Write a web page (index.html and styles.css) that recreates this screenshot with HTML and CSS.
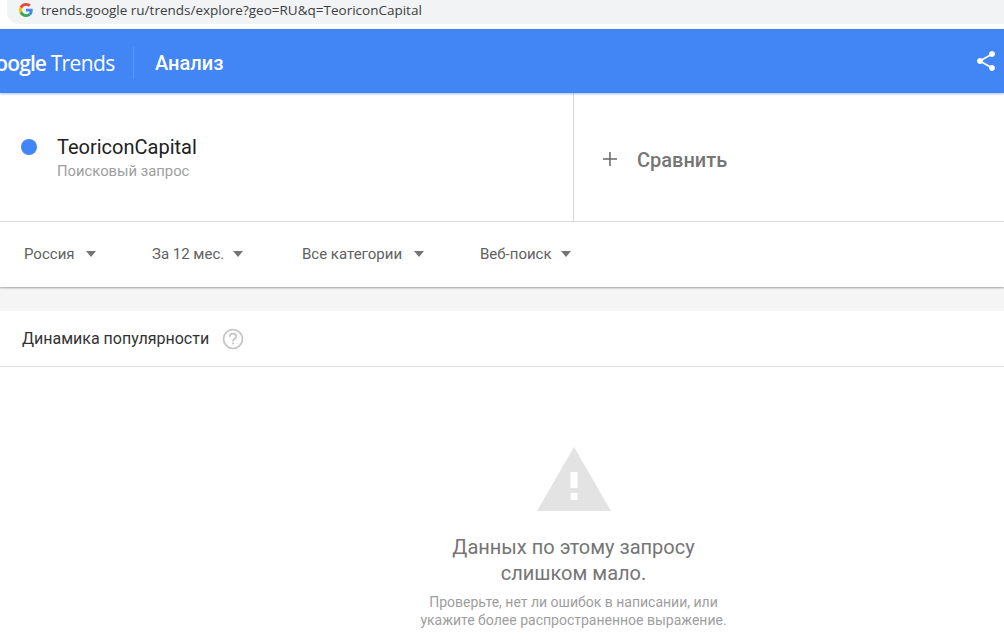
FILE: index.html
```html
<!DOCTYPE html>
<html lang="en">

<head>
    <meta charset="UTF-8">
    <meta name="viewport" content="width=device-width, initial-scale=1.0">
    <title>Google Trends</title>
    <link rel="stylesheet" href="styles.css">
</head>
<body>
    <div class="url-bar">
        <div class="url-pill">
            <svg class="g-icon" width="14" height="14" viewBox="0 0 48 48">
                <path fill="#ea4335" d="M24 9.500c3.500 0 6.700 1.200 9.200 3.600l6.900-6.900C35.900 2.400 30.500 0 24 0 14.600 0 6.500 5.400 2.600 13.200l8 6.200C12.500 13.600 17.800 9.500 24 9.500z"/>
                <path fill="#4285f4" d="M47 24.500c0-1.600-.1-3.100-.4-4.500H24v9h12.900c-.6 3-2.200 5.500-4.700 7.200l7.700 6C44.400 38.100 47 31.900 47 24.500z"/>
                <path fill="#fbbc05" d="M10.600 28.600c-.5-1.400-.8-3-.8-4.600s.3-3.200.8-4.600l-8-6.200C.9 16.500 0 20.100 0 24s.9 7.500 2.600 10.800l8-6.200z"/>
                <path fill="#34a853" d="M24 48c6.500 0 11.900-2.100 15.900-5.800l-7.700-6c-2.200 1.400-4.900 2.300-8.200 2.300-6.200 0-11.500-4.100-13.400-9.900l-8 6.200C6.500 42.600 14.600 48 24 48z"/>
            </svg>
            <span class="url-text">trends.google ru/trends/explore?geo=RU&amp;q=TeoriconCapital</span>
        </div>
    </div>

    <header class="app-bar">
        <div class="logo">Google <span class="logo-product">Trends</span></div>
        <div class="page-title">Анализ</div>
        <svg class="share-icon" width="24" height="24" viewBox="0 0 24 24">
            <path fill="#fff" d="M18 16.080c-.76 0-1.440.3-1.960.77L8.910 12.700c.05-.23.09-.46.09-.7s-.04-.47-.09-.7l7.050-4.110c.54.5 1.250.81 2.040.81 1.660 0 3-1.340 3-3s-1.340-3-3-3-3 1.340-3 3c0 .24.04.47.09.7L8.040 9.810C7.500 9.310 6.790 9 6 9c-1.660 0-3 1.340-3 3s1.340 3 3 3c.79 0 1.500-.31 2.040-.81l7.120 4.160c-.05.21-.08.43-.08.65 0 1.610 1.310 2.920 2.920 2.920s2.920-1.310 2.920-2.920-1.310-2.920-2.920-2.920z"/>
        </svg>
    </header>

    <section class="terms">
        <div class="term">
            <span class="term-dot"></span>
            <div>
                <div class="term-name">TeoriconCapital</div>
                <div class="term-type">Поисковый запрос</div>
            </div>
        </div>
        <div class="compare">
            <svg class="plus-icon" width="16" height="16" viewBox="0 0 16 16">
                <path fill="#666" d="M7.200 1h1.500v6.200H15v1.500H8.700V15H7.200V8.700H1V7.200h6.200z"/>
            </svg>
            <span>Сравнить</span>
        </div>
    </section>

    <section class="filters">
        <div class="filter filter-geo">Россия<span class="caret"></span></div>
        <div class="filter filter-time">За 12 мес.<span class="caret"></span></div>
        <div class="filter filter-cat">Все категории<span class="caret"></span></div>
        <div class="filter">Веб-поиск<span class="caret"></span></div>
    </section>

    <section class="card">
        <div class="card-head">
            <span>Динамика популярности</span>
            <svg class="help-icon" width="22" height="22" viewBox="0 0 22 22">
                <circle cx="11" cy="11" r="9.500" fill="none" stroke="#c4c4c4" stroke-width="1.700"/>
                <path fill="none" stroke="#c4c4c4" stroke-width="1.700" d="M7.800 8.800c0-1.900 1.400-3.100 3.200-3.100s3.200 1.200 3.200 2.800c0 2.200-3.200 2.400-3.200 4.900"/>
                <rect x="10.100" y="14.600" width="1.800" height="1.800" fill="#c4c4c4"/>
            </svg>
        </div>
        <div class="empty">
            <svg class="warn-icon" width="74" height="64" viewBox="0 0 74 64">
                <path fill="#e3e3e3" d="M37 0l37 64H0z"/>
                <rect x="33.500" y="25" width="7" height="16" fill="#fff"/>
                <rect x="33.500" y="46" width="7" height="7" fill="#fff"/>
            </svg>
            <div class="empty-title">Данных по этому запросу<br>слишком мало.</div>
            <div class="empty-text">Проверьте, нет ли ошибок в написании, или<br>укажите более распространенное выражение.</div>
        </div>
    </section>
</body>

</html>
```

FILE: styles.css
```css
html, body {
    height: 100%;
}

body {
    display: flex;
    flex-direction: column;
    margin: 0;
    font-family: Roboto, "Liberation Sans", sans-serif;
    background-color: #f5f5f5;
    overflow: hidden;
}

.url-bar {
    flex: none;
    height: 29px;
    box-sizing: border-box;
    padding-left: 7px;
    background-color: #fff;
}

.url-pill {
    display: flex;
    align-items: center;
    height: 24px;
    padding-left: 12px;
    background-color: #f1f3f4;
    border-bottom-left-radius: 12px;
}

.g-icon {
    margin-right: 8px;
    margin-top: -4px;
}

.url-text {
    font-family: "Open Sans", "Liberation Sans", sans-serif;
    font-size: 13.500px;
    color: #3c4043;
    margin-top: -4px;
}

.app-bar {
    flex: none;
    display: flex;
    align-items: center;
    height: 64px;
    background-color: #4285f4;
    box-shadow: 0 1px 2px rgba(66, 133, 244, 0.5);
    color: #fff;
    position: relative;
    overflow: hidden;
}

.logo {
    flex: none;
    width: 131px;
    height: 32px;
    line-height: 32px;
    margin: 3px 0 0 -19px;
    padding-right: 21px;
    border-right: 1px solid rgba(255, 255, 255, 0.15);
    font-family: "Open Sans", sans-serif;
    font-size: 21px;
    letter-spacing: -0.9px;
    white-space: nowrap;
    font-weight: 600;
}

.logo-product {
    font-weight: 400;
    font-size: 21px;
    letter-spacing: -0.6px;
}

.page-title {
    margin: 3px 0 0 21px;
    font-size: 20px;
    font-weight: 500;
}

.share-icon {
    margin-left: auto;
    margin-right: 6px;
}

.terms {
    flex: none;
    display: flex;
    height: 129px;
    box-sizing: border-box;
    background-color: #fff;
    border-bottom: 1px solid #e0e0e0;
}

.term {
    display: flex;
    align-items: flex-start;
    width: 574px;
    box-sizing: border-box;
    padding: 42px 0 0 21px;
    border-right: 1px solid #d8d8d8;
}

.term-dot {
    width: 16px;
    height: 16px;
    margin: 4px 20px 0 0;
    border-radius: 50%;
    background-color: #4285f4;
}

.term-name {
    font-size: 20px;
    line-height: 24px;
    color: #212121;
}

.term-type {
    margin-top: 2px;
    font-size: 14.800px;
    line-height: 20px;
    color: #9e9e9e;
}

.compare {
    display: flex;
    align-items: center;
    padding: 5px 0 0 28px;
    font-size: 20px;
    color: #757575;
    font-weight: 500;
}

.plus-icon {
    margin-right: 19px;
    margin-top: -2px;
}

.filters {
    flex: none;
    display: flex;
    align-items: center;
    height: 65px;
    box-sizing: border-box;
    padding: 0 0 2px 24px;
    font-size: 15px;
    color: #616161;
    background-color: #fff;
    box-shadow: 0 1px 2px rgba(0, 0, 0, 0.35);
    position: relative;
}

.filter {
    display: flex;
    align-items: center;
    white-space: nowrap;
}

.filter-geo {
    width: 128px;
}

.filter-time {
    width: 150px;
}

.filter-cat {
    width: 178px;
}

.caret {
    width: 0;
    height: 0;
    margin-left: 9px;
    border-left: 5.500px solid transparent;
    border-right: 5.500px solid transparent;
    border-top: 6px solid #757575;
}

.filter-geo .caret {
    margin-left: 11px;
}

.filter-cat .caret {
    margin-left: 12px;
}

.card {
    flex: 1;
    margin-top: 24px;
    background-color: #fff;
}

.card-head {
    display: flex;
    align-items: center;
    height: 56px;
    box-sizing: border-box;
    padding-left: 22px;
    font-size: 16px;
    color: #333;
    border-bottom: 1px solid #e0e0e0;
}

.help-icon {
    margin-left: 13px;
}

.empty {
    display: flex;
    flex-direction: column;
    align-items: center;
    padding: 80px 0 0 143px;
    text-align: center;
}

.empty-title {
    margin-top: 23px;
    font-size: 20px;
    line-height: 26px;
    color: #757575;
}

.empty-text {
    margin-top: 7px;
    font-size: 14px;
    line-height: 18px;
    color: #9e9e9e;
}
```
